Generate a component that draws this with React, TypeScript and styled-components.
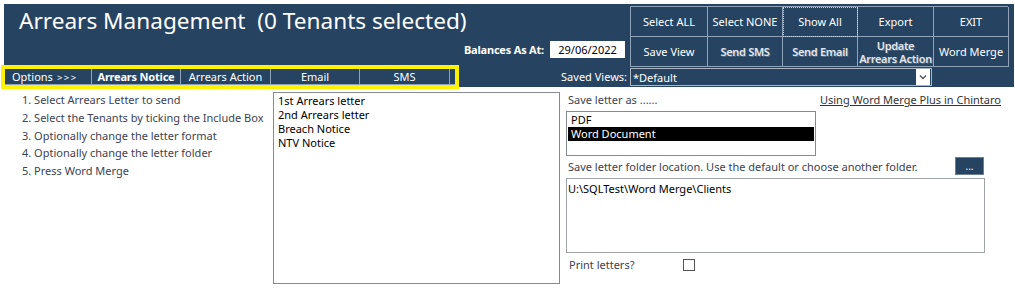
import React from 'react'
import styled, { createGlobalStyle } from 'styled-components'

const GlobalStyle = createGlobalStyle`
  html, body {
    margin: 0;
    padding: 0;
    background: #ffffff;
    font-family: "Noto Sans", "Open Sans", sans-serif;
  }
`

const NAVY = '#264461'
const GRID_LINE = '#8fa3b9'

const Page = styled.div`
  width: 1015px;
  height: 289px;
  overflow: hidden;
  padding-top: 4px;
  box-sizing: border-box;
`

const Header = styled.div`
  margin: 0 1px 0 4px;
  height: 83px;
  box-sizing: border-box;
  background: ${NAVY};
  padding: 2px 6px 0 0;
  display: grid;
  grid-template-columns: 626px 378px;
  grid-template-rows: 30px 31px 20px;
  color: #fff;
`

const Title = styled.div`
  grid-column: 1;
  grid-row: 1;
  padding-left: 15px;
  font-size: 22.6px;
  line-height: 30px;
  white-space: pre;
`

const ButtonGrid = styled.div`
  grid-column: 2;
  grid-row: 1 / span 2;
  display: grid;
  grid-template-columns: 77px 75px 75px 76px 75px;
  grid-template-rows: 30px 30px;
  border-top: 1px solid ${GRID_LINE};
  border-left: 1px solid ${GRID_LINE};
  height: 61px;
  box-sizing: border-box;
`

const GridButton = styled.div<{ $focus?: boolean; $raised?: boolean }>`
  display: flex;
  align-items: center;
  justify-content: center;
  text-align: center;
  border-right: 1px solid ${GRID_LINE};
  border-bottom: 1px solid ${GRID_LINE};
  font-size: 11px;
  line-height: 13px;
  white-space: nowrap;
  letter-spacing: ${({ $raised }) => ($raised ? '-0.3px' : '0')};
  color: ${({ $raised }) => ($raised ? '#e2e7ee' : '#ffffff')};
  font-weight: ${({ $raised }) => ($raised ? 600 : 400)};
  text-shadow: ${({ $raised }) => ($raised ? '1px 1px 0 #52677e' : 'none')};
  outline: ${({ $focus }) => ($focus ? '1px dotted #c8d2de' : 'none')};
  outline-offset: -1px;
`

const BalanceRow = styled.div`
  grid-column: 1;
  grid-row: 2;
  display: flex;
  justify-content: flex-end;
  align-items: flex-start;
  gap: 6px;
  padding: 5px 5px 0 0;
`

const BalanceLabel = styled.span`
  font-size: 11px;
  font-weight: 700;
  line-height: 17px;
  letter-spacing: -0.2px;
`

const DateBox = styled.div`
  width: 75px;
  height: 17px;
  box-sizing: border-box;
  background: #fff;
  color: #000;
  font-size: 11px;
  line-height: 17px;
  text-align: center;
`

const TabRow = styled.div`
  grid-column: 1;
  grid-row: 3;
  display: flex;
  align-items: center;
  justify-content: space-between;
  padding: 0 3px 0 1px;
`

const Tabs = styled.div`
  display: flex;
  width: 450px;
  height: 16px;
  outline: 4px solid #fff200;
  border-bottom: 1px solid ${GRID_LINE};
  box-sizing: border-box;
`

const Tab = styled.div<{ $w: number; $bold?: boolean; $left?: boolean }>`
  width: ${({ $w }) => $w}px;
  border-right: 1px solid ${GRID_LINE};
  box-sizing: border-box;
  font-size: 11px;
  line-height: 15px;
  letter-spacing: ${({ $bold }) => ($bold ? '-0.2px' : '0')};
  font-weight: ${({ $bold }) => ($bold ? 700 : 400)};
  text-align: ${({ $left }) => ($left ? 'left' : 'center')};
  padding-left: ${({ $left }) => ($left ? '7px' : '0')};
  white-space: nowrap;
`

const Arrows = styled.span`
  font-size: 9.5px;
  letter-spacing: 1.5px;
  margin-left: 4px;
`

const SavedLabel = styled.span`
  font-size: 11px;
  line-height: 20px;
`

const Dropdown = styled.div`
  grid-column: 2;
  grid-row: 3;
  width: 302px;
  height: 18px;
  margin-top: 1px;
  box-sizing: border-box;
  border: 1px solid #aab6c3;
  display: flex;
  align-items: center;
  justify-content: space-between;
  padding-left: 2px;
  font-size: 11px;
`

const DropArrow = styled.div`
  width: 14px;
  height: 16px;
  margin-right: 1px;
  background: #fff;
  display: flex;
  align-items: center;
  justify-content: center;
`

const Body = styled.div`
  display: flex;
  padding-top: 5px;
`

const Steps = styled.ol`
  list-style: none;
  margin: -1px 0 0 0;
  padding: 0 0 0 22px;
  width: 251px;
  color: #3c4352;
  font-size: 11px;
  line-height: 17.75px;
  white-space: nowrap;
`

const ListBox = styled.div<{ $w: number; $h: number }>`
  width: ${({ $w }) => $w}px;
  height: ${({ $h }) => $h}px;
  box-sizing: border-box;
  border: 1px solid #868a93;
  padding: 1px 1px 0 1px;
  flex-shrink: 0;
`

const ListItem = styled.div<{ $selected?: boolean }>`
  font-size: 11px;
  line-height: 14px;
  padding-left: 3px;
  color: ${({ $selected }) => ($selected ? '#fff' : '#000')};
  background: ${({ $selected }) => ($selected ? '#000' : 'transparent')};
`

const RightPanel = styled.div`
  margin-left: 6px;
  width: 436px;
  display: flex;
  flex-direction: column;
`

const SpreadRow = styled.div<{ $gap?: number }>`
  display: flex;
  justify-content: space-between;
  align-items: center;
  margin-top: ${({ $gap }) => $gap ?? 0}px;
`

const Caption = styled.span`
  font-size: 11px;
  color: #3c4352;
  padding-left: 2px;
`

const HelpLink = styled.a`
  font-size: 11px;
  color: #333;
  text-decoration: underline;
  margin-right: 1px;
`

const Spaced = styled.div<{ $gap: number }>`
  margin-top: ${({ $gap }) => $gap}px;
`

const BrowseButton = styled.div`
  width: 29px;
  height: 18px;
  background: ${NAVY};
  color: #fff;
  font-size: 10px;
  line-height: 16px;
  text-align: center;
  margin-right: 18px;
  border: 1px solid #6e7f92;
  box-sizing: border-box;
`

const FolderBox = styled.div`
  width: 419px;
  height: 75px;
  box-sizing: border-box;
  border: 1px solid #a0a4aa;
  font-size: 11px;
  padding: 2px 1px;
  color: #000;
`

const CheckRow = styled.div`
  display: flex;
  align-items: center;
  margin-top: 4px;
`

const CheckLabel = styled.span`
  font-size: 11px;
  color: #3c4352;
  width: 114px;
  padding-left: 3px;
`

const CheckBox = styled.div`
  width: 12px;
  height: 12px;
  box-sizing: border-box;
  border: 1px solid #555;
  background: #fff;
`

const topButtons = ['Select ALL', 'Select NONE', 'Show All', 'Export', 'EXIT']
const steps = [
  '1. Select Arrears Letter to send',
  '2. Select the Tenants by ticking the Include Box',
  '3. Optionally change the letter format',
  '4. Optionally change the letter folder',
  '5. Press Word Merge',
]
const letters = ['1st Arrears letter', '2nd Arrears letter', 'Breach Notice', 'NTV Notice']

export default function App() {
  return (
    <Page>
      <GlobalStyle />
      <Header>
        <Title>Arrears Management  (0 Tenants selected)</Title>
        <ButtonGrid>
          {topButtons.map(b => (
            <GridButton key={b} $focus={b === 'Show All'}>{b}</GridButton>
          ))}
          <GridButton>Save View</GridButton>
          <GridButton $raised>Send SMS</GridButton>
          <GridButton $raised>Send Email</GridButton>
          <GridButton $raised>Update<br />Arrears Action</GridButton>
          <GridButton>Word Merge</GridButton>
        </ButtonGrid>
        <BalanceRow>
          <BalanceLabel>Balances As At:</BalanceLabel>
          <DateBox>29/06/2022</DateBox>
        </BalanceRow>
        <TabRow>
          <Tabs>
            <Tab $w={87} $left>Options<Arrows>&gt;&gt;&gt;</Arrows></Tab>
            <Tab $w={89} $bold>Arrears Notice</Tab>
            <Tab $w={90}>Arrears Action</Tab>
            <Tab $w={89}>Email</Tab>
            <Tab $w={90}>SMS</Tab>
          </Tabs>
          <SavedLabel>Saved Views:</SavedLabel>
        </TabRow>
        <Dropdown>
          <span>*Default</span>
          <DropArrow>
            <svg width="8" height="6" viewBox="0 0 8 6">
              <path d="M1 1.5 L4 4.5 L7 1.5" fill="none" stroke="#555" strokeWidth="1.4" />
            </svg>
          </DropArrow>
        </Dropdown>
      </Header>
      <Body>
        <Steps>
          {steps.map(s => <li key={s}>{s}</li>)}
        </Steps>
        <ListBox $w={287} $h={192}>
          {letters.map(l => <ListItem key={l}>{l}</ListItem>)}
        </ListBox>
        <RightPanel>
          <SpreadRow>
            <Caption>Save letter as ......</Caption>
            <HelpLink>Using Word Merge Plus in Chintaro</HelpLink>
          </SpreadRow>
          <Spaced $gap={4}>
            <ListBox $w={250} $h={45}>
              <ListItem>PDF</ListItem>
              <ListItem $selected>Word Document</ListItem>
            </ListBox>
          </Spaced>
          <SpreadRow $gap={1}>
            <Caption>Save letter folder location. Use the default or choose another folder.</Caption>
            <BrowseButton>...</BrowseButton>
          </SpreadRow>
          <Spaced $gap={3}>
            <FolderBox>U:\SQLTest\Word Merge\Clients</FolderBox>
          </Spaced>
          <CheckRow>
            <CheckLabel>Print letters?</CheckLabel>
            <CheckBox />
          </CheckRow>
        </RightPanel>
      </Body>
    </Page>
  )
}
